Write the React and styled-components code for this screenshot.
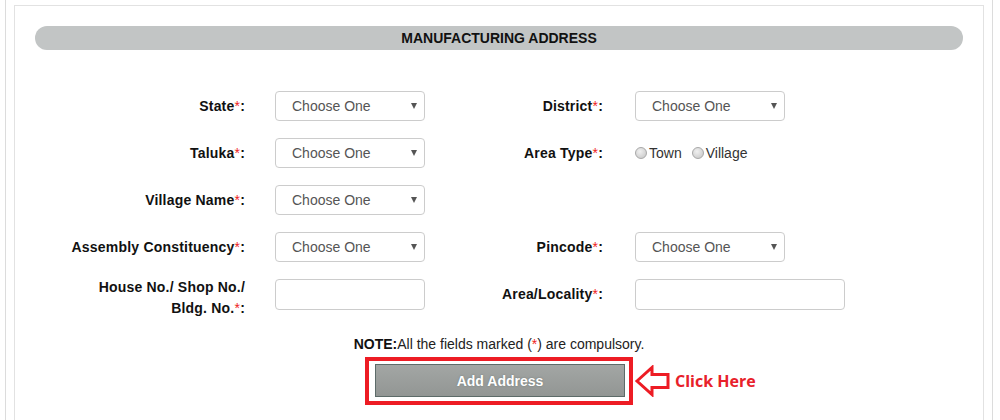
import React from 'react';
import styled, { createGlobalStyle } from 'styled-components';

const GlobalStyle = createGlobalStyle`
  body {
    margin: 0;
    background: #fff;
    font-family: "Liberation Sans", Arial, sans-serif;
  }
`;

const Page = styled.div`
  margin-left: 5px;
  width: 988px;
  height: 420px;
  padding-top: 5px;
  box-sizing: border-box;
  border-left: 1px solid #dcdcdc;
  border-right: 1px solid #dcdcdc;
  overflow: hidden;
`;

const Panel = styled.div`
  margin: 0 8px;
  height: 100%;
  box-sizing: border-box;
  border: 1px solid #e2e2e2;
  border-bottom: none;
  padding: 20px 20px 0;
`;

const SectionBar = styled.div`
  height: 24px;
  border-radius: 12px;
  background: #c2c5c5;
  display: flex;
  align-items: center;
  justify-content: center;
  font-size: 14px;
  font-weight: bold;
  color: #111;
`;

const FormGrid = styled.div`
  display: grid;
  grid-template-columns: 240px 150px 210px 210px;
  row-gap: 17px;
  align-items: center;
  margin-top: 41px;
`;

const Label = styled.label`
  text-align: right;
  padding-right: ${p => (p.$right ? '32px' : '30px')};
  font-size: 14px;
  font-weight: bold;
  color: #111;
  letter-spacing: 0.2px;
  line-height: 21px;
  ${p => p.$multi && 'align-self: start; margin: -2px 0 -13px;'}
`;

const Star = styled.span`
  color: #ee2222;
  font-weight: normal;
`;

const SelectWrap = styled.div`
  position: relative;
  width: ${p => p.$w || 150}px;
  height: 30px;
`;

const Select = styled.select`
  appearance: none;
  width: 100%;
  height: 100%;
  box-sizing: border-box;
  border: 1px solid #cccccc;
  border-radius: 4px;
  background: #fff;
  padding: 0 0 0 16px;
  font-family: "Liberation Sans", Arial, sans-serif;
  font-size: 14px;
  color: #555;
  outline: none;
`;

const Caret = styled.span`
  position: absolute;
  right: 8px;
  top: 12px;
  width: 0;
  height: 0;
  border-left: 3.5px solid transparent;
  border-right: 3.5px solid transparent;
  border-top: 6px solid #555;
  pointer-events: none;
`;

const TextInput = styled.input`
  width: ${p => p.$w || 150}px;
  height: 31px;
  box-sizing: border-box;
  border: 1px solid #cccccc;
  border-radius: 4px;
  outline: none;
`;

const RadioGroup = styled.div`
  display: flex;
  align-items: center;
  gap: 10px;
  font-size: 14px;
  color: #333;
`;

const RadioItem = styled.label`
  display: flex;
  align-items: center;
  gap: 2px;
`;

const RadioDot = styled.span`
  width: 12px;
  height: 12px;
  border-radius: 50%;
  box-sizing: border-box;
  border: 1px solid #a8a8a8;
  background: radial-gradient(circle at 40% 35%, #f0f0f0, #c4c4c4);
`;

const Empty = styled.div``;

const Note = styled.div`
  text-align: center;
  margin-top: 26px;
  font-size: 14px;
  color: #222;
  b {
    color: #111;
  }
`;

const ActionRow = styled.div`
  display: flex;
  align-items: center;
  margin-top: 5px;
  margin-left: 330px;
`;

const Highlight = styled.div`
  border: 4px solid #ed1c24;
  padding: 3px 4px 4px 6px;
`;

const AddButton = styled.button`
  width: 250px;
  height: 33px;
  border: 1px solid #5d6b69;
  background: linear-gradient(#a3a6a4, #929694);
  color: #fff;
  font-family: "Liberation Sans", Arial, sans-serif;
  font-size: 14px;
  font-weight: bold;
  text-shadow: 0 0 2px #6f7a78;
  cursor: pointer;
  display: block;
`;

const Hint = styled.div`
  display: flex;
  align-items: center;
  gap: 5px;
  margin-left: 2px;
  color: #e8202a;
  font-family: "Open Sans", sans-serif;
  font-weight: bold;
  font-size: 16px;
`;

function Field({ label, right, multi, children }) {
  return (
    <>
      <Label $right={right} $multi={multi}>
        {label}
        <Star>*</Star>:
      </Label>
      {children}
    </>
  );
}

function ChooseSelect({ w }) {
  return (
    <SelectWrap $w={w}>
      <Select defaultValue="">
        <option value="">Choose One</option>
      </Select>
      <Caret />
    </SelectWrap>
  );
}

function App() {
  return (
    <>
      <GlobalStyle />
      <Page>
        <Panel>
          <SectionBar>MANUFACTURING ADDRESS</SectionBar>
          <FormGrid>
            <Field label="State"><ChooseSelect /></Field>
            <Field label="District" right><ChooseSelect /></Field>

            <Field label="Taluka"><ChooseSelect /></Field>
            <Field label="Area Type" right>
              <RadioGroup>
                <RadioItem><RadioDot />Town</RadioItem>
                <RadioItem><RadioDot />Village</RadioItem>
              </RadioGroup>
            </Field>

            <Field label="Village Name"><ChooseSelect /></Field>
            <Empty />
            <Empty />

            <Field label="Assembly Constituency"><ChooseSelect /></Field>
            <Field label="Pincode" right><ChooseSelect /></Field>

            <Field label={<>House No./ Shop No./<br />Bldg. No.</>} multi>
              <TextInput />
            </Field>
            <Field label="Area/Locality" right><TextInput $w={210} /></Field>
          </FormGrid>

          <Note>
            <b>NOTE:</b>All the fields marked (<Star>*</Star>) are compulsory.
          </Note>

          <ActionRow>
            <Highlight>
              <AddButton type="button">Add Address</AddButton>
            </Highlight>
            <Hint>
              <svg width="35" height="32" viewBox="0 0 35 32">
                <path
                  d="M2 16 L17 2.5 L17 9.5 L33 9.5 L33 22.5 L17 22.5 L17 29.5 Z"
                  fill="none"
                  stroke="#ed1c24"
                  strokeWidth="3"
                  strokeLinejoin="miter"
                />
              </svg>
              Click Here
            </Hint>
          </ActionRow>
        </Panel>
      </Page>
    </>
  );
}

export default App;
